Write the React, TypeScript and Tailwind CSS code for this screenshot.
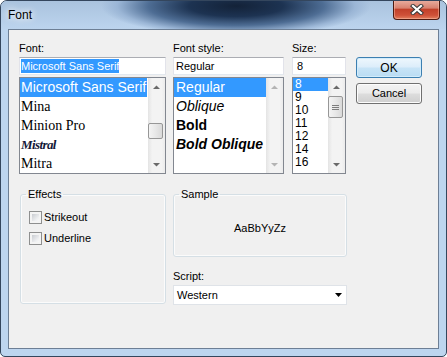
import React from "react";

const fontRows = [
  { label: "Microsoft Sans Serif", cls: "font-['Liberation_Sans',Arial,sans-serif] text-[14px]", selected: true },
  { label: "Mina", cls: "font-['Liberation_Serif',serif] text-[14px]" },
  { label: "Minion Pro", cls: "font-['Liberation_Serif',serif] text-[14px]" },
  { label: "Mistral", cls: "font-['Liberation_Serif',serif] text-[13px] italic font-semibold text-[#141838] tracking-[-0.6px]" },
  { label: "Mitra", cls: "font-['Liberation_Serif',serif] text-[14px]" },
];

const styleRows = [
  { label: "Regular", cls: "", selected: true },
  { label: "Oblique", cls: "italic" },
  { label: "Bold", cls: "font-bold" },
  { label: "Bold Oblique", cls: "font-bold italic" },
];

const sizes = ["8", "9", "10", "11", "12", "14", "16"];

function Arrow({ dir, dim }: { dir: "up" | "down"; dim?: boolean }) {
  return (
    <svg width="7" height="4" viewBox="0 0 7 4">
      <path
        d={dir === "up" ? "M0 4L3.5 0.5L7 4Z" : "M0 0L3.5 3.5L7 0Z"}
        fill={dim ? "#b4b4b4" : "#6a6a6a"}
      />
    </svg>
  );
}

interface ScrollProps {
  thumb?: string;
  grip?: boolean;
  dim?: boolean;
}

const ScrollBar: React.FC<ScrollProps> = ({ thumb, grip, dim }) => {
  return (
    <div className="w-[17px] flex flex-col bg-[linear-gradient(to_right,#e4e4e4,#f3f3f3_25%,#f3f3f3_80%,#ebebeb)]">
      <div className="h-[17px] flex items-center justify-center">
        <Arrow dir="up" dim={dim} />
      </div>
      <div className="flex-1">
        {thumb && (
          <div
            className={`w-[15px] rounded-[2px] border border-[#979797] bg-[linear-gradient(to_right,#f4f4f4,#e8e8e8_50%,#d9d9d9)] flex flex-col items-center justify-center gap-[1px] ${thumb}`}
          >
            {grip && (
              <>
                <div className="w-[7px] h-px bg-[#7d7d7d]" />
                <div className="w-[7px] h-px bg-[#7d7d7d]" />
                <div className="w-[7px] h-px bg-[#7d7d7d]" />
              </>
            )}
          </div>
        )}
      </div>
      <div className="h-[17px] flex items-center justify-center">
        <Arrow dir="down" dim={dim} />
      </div>
    </div>
  );
};

function TextBox({ children }: { children: React.ReactNode }) {
  return (
    <div className="h-[18px] bg-white border border-[#e2e3ea] border-t-[#abadb3] border-b-[#e3e9ef] flex items-center pl-[1px] text-[11px] whitespace-nowrap overflow-hidden">
      {children}
    </div>
  );
}

function Label({ children }: { children: React.ReactNode }) {
  return <div className="h-[13px] leading-[13px] text-[11px] mb-[2px]">{children}</div>;
}

function CheckBox({ label }: { label: string }) {
  return (
    <div className="h-[15px] flex items-center gap-[2px] ml-[3px]">
      <div className="w-[13px] h-[13px] border border-[#8e8f8f] bg-[#f4f4f4] p-[2px]">
        <div className="w-full h-full bg-[linear-gradient(135deg,#c9ccd1,#eeeff1_70%,#f8f8f8)]" />
      </div>
      <span className="text-[11px] leading-[13px]">{label}</span>
    </div>
  );
}

export default function App() {
  return (
    <div className="w-[447px] h-[357px] flex flex-col rounded-t-[7px] rounded-b-[5px] border border-[#34465d] bg-[#bdd5ef] overflow-hidden font-['Liberation_Sans',Arial,sans-serif] text-black">
      {/* title bar */}
      <div className="h-[28px] flex items-start justify-between bg-[radial-gradient(ellipse_135px_30px_at_235px_5px,#132238_0%,#1d3352_35%,#4e6d94_65%,#9bb6d6_88%,transparent_100%),linear-gradient(#aac3de,#bcd4ee)]">
        <span className="pl-[7px] pt-[7px] text-[12px] leading-[14px] [text-shadow:0_0_6px_#ffffff,0_0_10px_#ffffff]">
          Font
        </span>
        <div className="mr-[6px] -mt-px w-[47px] h-[20px] rounded-b-[4px] border border-t-0 border-[#4d1a10] bg-[linear-gradient(#eab0a2,#d88270_42%,#c2412a_50%,#cf5138_80%,#e2805f)] flex items-center justify-center shadow-[inset_0_0_0_1px_rgba(255,200,180,0.45)]">
          <svg width="14" height="11" viewBox="0 0 14 11">
            <path d="M3 2L11 9M11 2L3 9" stroke="#3b3b3b" strokeWidth="4.2" strokeLinecap="square" />
            <path d="M3 2L11 9M11 2L3 9" stroke="#ffffff" strokeWidth="2.2" strokeLinecap="square" />
          </svg>
        </div>
      </div>

      {/* client area */}
      <div className="flex-1 flex px-[7px] pb-[7px]">
        <div className="flex-1 bg-[#f0f0f0] border border-[#6d7f95] flex flex-col">
          <div className="flex pt-[12px] pl-[10px]">
            {/* font */}
            <div className="w-[147px] flex flex-col">
              <Label>Font:</Label>
              <TextBox>
                <span className="bg-[#3399ff] text-white leading-[14px]">Microsoft Sans Serif</span>
              </TextBox>
              <div className="mt-[2px] h-[97px] border border-[#828790] bg-white flex">
                <div className="flex-1 overflow-hidden">
                  {fontRows.map((r) => (
                    <div
                      key={r.label}
                      className={`h-[19px] flex items-center pl-[1px] whitespace-nowrap mr-px ${r.cls} ${
                        r.selected ? "bg-[#3399ff] text-white" : ""
                      }`}
                    >
                      {r.label}
                    </div>
                  ))}
                </div>
                <ScrollBar thumb="mt-[28px] h-[16px]" />
              </div>
            </div>

            {/* style */}
            <div className="w-[111px] ml-[7px] flex flex-col">
              <Label>Font style:</Label>
              <TextBox>
                <span className="pl-[1px]">Regular</span>
              </TextBox>
              <div className="mt-[2px] h-[97px] border border-[#828790] bg-white flex">
                <div className="flex-1 overflow-hidden">
                  {styleRows.map((r) => (
                    <div
                      key={r.label}
                      className={`h-[19px] flex items-center pl-[2px] whitespace-nowrap text-[14px] ${r.cls} ${
                        r.selected ? "bg-[#3399ff] text-white" : ""
                      }`}
                    >
                      {r.label}
                    </div>
                  ))}
                </div>
                <ScrollBar dim />
              </div>
            </div>

            {/* size */}
            <div className="w-[54px] ml-[8px] flex flex-col">
              <Label>Size:</Label>
              <TextBox>
                <span className="pl-[3px]">8</span>
              </TextBox>
              <div className="mt-[2px] h-[97px] border border-[#828790] bg-white flex">
                <div className="flex-1 overflow-hidden">
                  {sizes.map((s, i) => (
                    <div
                      key={s}
                      className={`h-[13px] leading-[13px] pl-[2px] text-[12px] ${
                        i === 0 ? "bg-[#3399ff] text-white" : ""
                      }`}
                    >
                      {s}
                    </div>
                  ))}
                </div>
                <ScrollBar thumb="mt-px h-[22px]" grip />
              </div>
            </div>

            {/* buttons */}
            <div className="w-[66px] ml-[10px] pt-[15px] flex flex-col gap-[5px]">
              <button className="h-[21px] rounded-[3px] border border-[#3c7fb1] bg-[linear-gradient(#eef7fd,#dcedfa_48%,#c8e4f7_52%,#b9dcf3)] shadow-[inset_0_0_0_1px_#d2ecfb] text-[12px] leading-none">
                OK
              </button>
              <button className="h-[21px] rounded-[3px] border border-[#707070] bg-[linear-gradient(#f3f3f3,#ebebeb_48%,#dddddd_52%,#cfcfcf)] shadow-[inset_0_0_0_1px_#fcfcfc] text-[11px] leading-none">
                Cancel
              </button>
            </div>
          </div>

          {/* lower section */}
          <div className="flex mt-[14px] pl-[11px]">
            <fieldset className="w-[146px] h-[116px] border border-[#d5dfe5] rounded-[3px] px-[5px] shadow-[inset_0_0_0_1px_#fbfbfb]">
              <legend className="px-[2px] text-[11px] leading-[13px]">Effects</legend>
              <div className="pt-[9px] flex flex-col gap-[6px]">
                <CheckBox label="Strikeout" />
                <CheckBox label="Underline" />
              </div>
            </fieldset>

            <div className="w-[174px] ml-[7px] flex flex-col">
              <fieldset className="h-[69px] border border-[#d5dfe5] rounded-[3px] px-[5px] shadow-[inset_0_0_0_1px_#fbfbfb]">
                <legend className="px-[2px] text-[11px] leading-[13px]">Sample</legend>
                <div className="h-[54px] flex items-center justify-center text-[11px] -mx-[5px]">
                  AaBbYyZz
                </div>
              </fieldset>
              <div className="mt-[13px] h-[13px] leading-[13px] text-[11px]">Script:</div>
              <div className="mt-[2px] h-[20px] bg-white border border-[#dfe3e8] flex items-center justify-between pl-[3px] pr-[4px] text-[11px]">
                <span>Western</span>
                <svg width="7" height="4" viewBox="0 0 7 4">
                  <path d="M0 0L3.5 4L7 0Z" fill="#000000" />
                </svg>
              </div>
            </div>
          </div>
        </div>
      </div>
    </div>
  );
}
